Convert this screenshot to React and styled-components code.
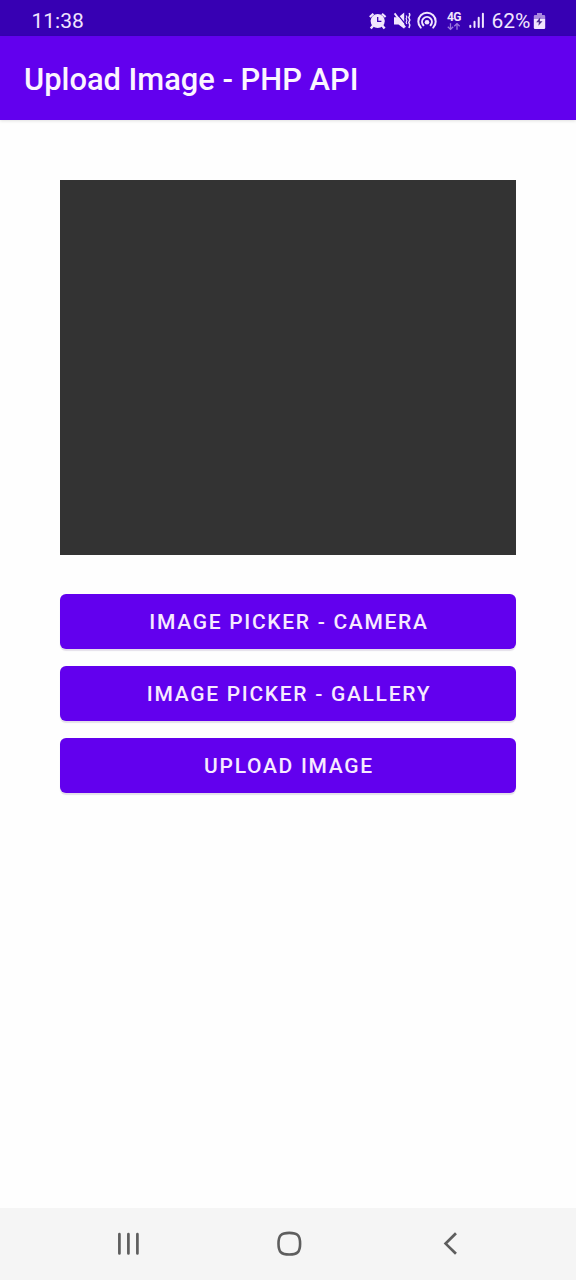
import React from "react";
import styled, { createGlobalStyle } from "styled-components";

const GlobalStyle = createGlobalStyle`
  * { box-sizing: border-box; }
  body { margin: 0; background: #fff; font-family: Roboto, "Liberation Sans", sans-serif; }
`;

const Screen = styled.div`
  width: 576px;
  height: 1280px;
  display: flex;
  flex-direction: column;
  background: #fefefe;
  overflow: hidden;
`;

const StatusBar = styled.header`
  height: 36px;
  flex: none;
  display: flex;
  justify-content: space-between;
  padding: 0 30px 0 31.5px;
  background: #3700b3;
  color: #f1e6fe;
`;

const StatusText = styled.span`
  font-size: 21px;
  line-height: 24px;
  padding-top: 9px;
  white-space: nowrap;
`;

const StatusIcons = styled.div`
  display: flex;
`;

const Glyph = styled.svg`
  display: block;
  flex: none;
  margin-left: ${(p) => p.$gap || 0}px;
`;

const Network = styled.div`
  width: 15px;
  margin-left: 9px;
  padding-top: 11px;
  font-size: 12px;
  line-height: 12px;
  font-weight: 700;
  letter-spacing: -0.6px;
`;

const Percent = styled(StatusText)`
  width: 39px;
  margin-left: 6.5px;
  margin-right: 0.5px;
`;

const AppBar = styled.div`
  position: relative;
  height: 84px;
  flex: none;
  display: flex;
  align-items: center;
  padding: 3px 24px 0;
  background: #6200ee;
  box-shadow: 0 1px 3px rgba(0, 0, 0, 0.12);
`;

const Title = styled.h1`
  margin: 0;
  color: #fbf5ff;
  font-size: 30.85px;
  line-height: 36px;
  font-weight: 500;
  white-space: nowrap;
`;

const Content = styled.main`
  flex: 1;
  padding: 60px 60px 0;
`;

const Preview = styled.div`
  height: 375px;
  background: #333;
`;

const Actions = styled.div`
  display: flex;
  flex-direction: column;
  gap: 17px;
  padding-top: 39px;
`;

const ActionButton = styled.button`
  height: 55px;
  padding: 1px 0 0 2px;
  border: 0;
  border-radius: 6px;
  background: #6200ee;
  color: #f7eaff;
  font: 500 21px/24px Roboto, "Liberation Sans", sans-serif;
  letter-spacing: 1.7px;
  text-transform: uppercase;
  box-shadow: 0 2px 1px rgba(40, 0, 80, 0.12);
`;

const NavBar = styled.nav`
  height: 72px;
  flex: none;
  display: flex;
  justify-content: space-between;
  align-items: center;
  padding: 0 111px 0 113px;
  background: #f5f5f5;
`;

const NavButton = styled.button`
  width: 30px;
  height: 30px;
  padding: 0;
  border: 0;
  background: none;
`;

const AlarmIcon = () => (
  <Glyph width="18" height="36" viewBox="369 0 18 36" fill="none" stroke="currentColor">
    <circle cx="377.7" cy="21" r="7.1" fill="currentColor" stroke="none" />
    <path d="M369.8 17L373.4 13.8M385.6 17L382 13.8" strokeWidth="2.2" />
    <path d="M373.2 25.5L370.8 28.6M382.2 25.5L384.6 28.6" strokeWidth="2.4" />
    <path d="M377.7 17V21.4H381.4" stroke="#3700b3" strokeWidth="1.3" />
  </Glyph>
);

const MuteIcon = () => (
  <Glyph $gap={6} width="18" height="36" viewBox="393 0 18 36" fill="none" stroke="currentColor">
    <path d="M394 17.2H398.5L404.2 12.6V28.8L398.5 24.5H394Z" fill="currentColor" stroke="none" />
    <path d="M396 12.6L404.8 23.4" stroke="#3700b3" strokeWidth="1.2" />
    <path d="M394.6 13.4L405.2 27.4" strokeWidth="1.8" />
    <path d="M406.1 15.5L406.9 17L406.1 18.7L406.9 20.4L406.1 22.2L406.9 24" strokeWidth="1.1" />
    <path d="M409.2 13L409.8 15L408.8 17.5L409.8 20L408.8 22.5L409.8 25L409 28" strokeWidth="1.5" />
  </Glyph>
);

const HotspotIcon = () => (
  <Glyph $gap={6} width="21" height="36" viewBox="417 0 21 36" fill="none" stroke="currentColor" strokeWidth="2" strokeLinecap="round">
    <path d="M420.8 27.6A8.7 8.7 0 1 1 433.2 27.6" />
    <path d="M423.4 25.2A4.9 4.9 0 1 1 430.6 25.2" />
    <circle cx="427" cy="22.2" r="2.3" fill="currentColor" stroke="none" />
  </Glyph>
);

const DataArrows = () => (
  <Glyph width="14" height="8" viewBox="0 0 14 8" fill="none" stroke="#9a78dc" strokeWidth="1.3">
    <path d="M3.5 .2V6.2M.8 3.7L3.5 6.4L6.2 3.7M10 6.8V.8M7.3 3.3L10 .6L12.7 3.3" />
  </Glyph>
);

const SignalIcon = () => (
  <Glyph $gap={7} width="16" height="36" viewBox="469 0 16 36" fill="none" stroke="currentColor" strokeWidth="2" strokeLinecap="round">
    <path d="M470.3 25.8V27M474.5 21.8V27M478.7 17.8V27M482.9 13.8V27" />
  </Glyph>
);

const BatteryIcon = () => (
  <Glyph $gap={2} width="13" height="36" viewBox="533 0 13 36">
    <path d="M537 13H542V15H544Q545.2 15 545.2 16.3V19H533.8V16.3Q533.8 15 535 15H537Z" fill="#a987df" />
    <path d="M533.8 19H545.2V27.7Q545.2 29 544 29H535Q533.8 29 533.8 27.7Z" fill="currentColor" />
    <path d="M540.3 17.2L536.2 22.3H538.9L538.4 25.8L542.5 21.2H539.8Z" fill="#4a2b91" />
  </Glyph>
);

export default function App() {
  return (
    <>
      <GlobalStyle />
      <Screen>
        <StatusBar>
          <StatusText>11:38</StatusText>
          <StatusIcons>
            <AlarmIcon />
            <MuteIcon />
            <HotspotIcon />
            <Network>
              4G
              <DataArrows />
            </Network>
            <SignalIcon />
            <Percent>62%</Percent>
            <BatteryIcon />
          </StatusIcons>
        </StatusBar>
        <AppBar>
          <Title>Upload Image - PHP API</Title>
        </AppBar>
        <Content>
          <Preview />
          <Actions>
            <ActionButton>Image Picker - Camera</ActionButton>
            <ActionButton>Image Picker - Gallery</ActionButton>
            <ActionButton>Upload Image</ActionButton>
          </Actions>
        </Content>
        <NavBar>
          <NavButton aria-label="Recent apps">
            <Glyph width="30" height="30" fill="none" stroke="#5e5e5e" strokeWidth="2.7" strokeLinecap="round">
              <path d="M6.4 5.2V24.4M15.4 5.2V24.4M24.4 5.2V24.4" />
            </Glyph>
          </NavButton>
          <NavButton aria-label="Home">
            <Glyph width="30" height="30" fill="none" stroke="#5e5e5e" strokeWidth="2.6">
              <path d="M15.3 3.9C23.4 3.9 26.1 6.4 26.1 14.7S23.4 25.5 15.3 25.5S4.5 23 4.5 14.7S7.2 3.9 15.3 3.9Z" />
            </Glyph>
          </NavButton>
          <NavButton aria-label="Back">
            <Glyph width="30" height="30" fill="none" stroke="#5e5e5e" strokeWidth="2.7" strokeLinecap="square">
              <path d="M20 5.2L10.6 14.6L20 23.8" />
            </Glyph>
          </NavButton>
        </NavBar>
      </Screen>
    </>
  );
}
